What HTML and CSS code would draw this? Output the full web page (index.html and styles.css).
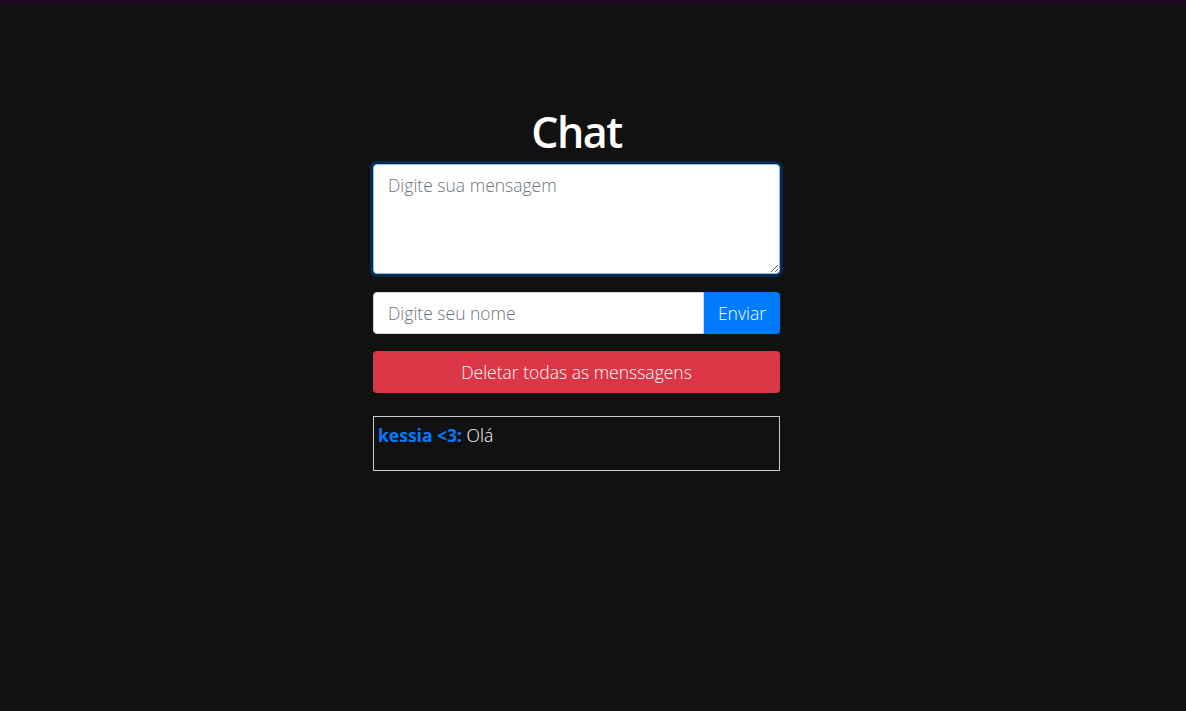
FILE: index.html
```html
<!DOCTYPE html>
<html lang="pt-BR">
<head>
<meta charset="utf-8">
<title>Chat</title>
<link rel="stylesheet" href="styles.css">
</head>
<body>
<div class="topbar"></div>
<main class="chat">
  <h1 class="title">Chat</h1>
  <textarea class="message-input focused" placeholder="Digite sua mensagem"></textarea>
  <div class="input-group">
    <input class="name-input" type="text" placeholder="Digite seu nome">
    <button class="btn btn-send">Enviar</button>
  </div>
  <button class="btn btn-delete">Deletar todas as menssagens</button>
  <div class="messages">
    <p class="msg"><span class="author">kessia &lt;3:</span> Olá</p>
  </div>
</main>
</body>
</html>
```
FILE: styles.css
```css
* { box-sizing: border-box; }
html, body { margin: 0; height: 100%; }
body {
  background: #111111;
  color: #ffffff;
  font-family: "Open Sans", "Noto Sans", sans-serif;
  font-weight: 300;
  font-size: 17.5px;
  padding-right: 33px;
}
.topbar { height: 6px; background: #1d0a1e; margin-right: -33px; }
.chat {
  width: 407px;
  margin: 0 auto;
  padding-top: 98px;
  display: flex;
  flex-direction: column;
}
.title {
  margin: 0 0 4px;
  text-align: center;
  font-size: 43px;
  font-weight: 600;
  letter-spacing: -1.5px;
  line-height: 56px;
}
.message-input {
  height: 110px;
  resize: vertical;
  border: 1px solid #80bdff;
  border-radius: 4px;
  padding: 8px 14px;
  font: inherit;
  color: #495057;
  background: #fff;
  outline: none;
}
.message-input.focused { box-shadow: 0 0 0 3px rgba(0,123,255,.25); }
.message-input::placeholder, .name-input::placeholder { color: #6c757d; opacity: 1; }
.input-group {
  display: flex;
  margin-top: 18px;
  height: 42px;
}
.name-input {
  flex: 1;
  min-width: 0;
  border: 1px solid #ced4da;
  border-radius: 4px 0 0 4px;
  padding: 0 14px;
  font: inherit;
  background: #fff;
  outline: none;
}
.btn {
  border: none;
  font: inherit;
  color: #fff;
  cursor: pointer;
}
.btn-send {
  width: 76px;
  background: #007bff;
  border-radius: 0 4px 4px 0;
}
.btn-delete {
  margin-top: 17px;
  height: 42px;
  background: #dc3545;
  border-radius: 4px;
}
.messages {
  margin-top: 23px;
  height: 55px;
  border: 1px solid #cccccc;
  padding: 6px 4px;
}
.msg { margin: 0; line-height: 24px; }
.author { color: #007bff; font-weight: 700; }
```
